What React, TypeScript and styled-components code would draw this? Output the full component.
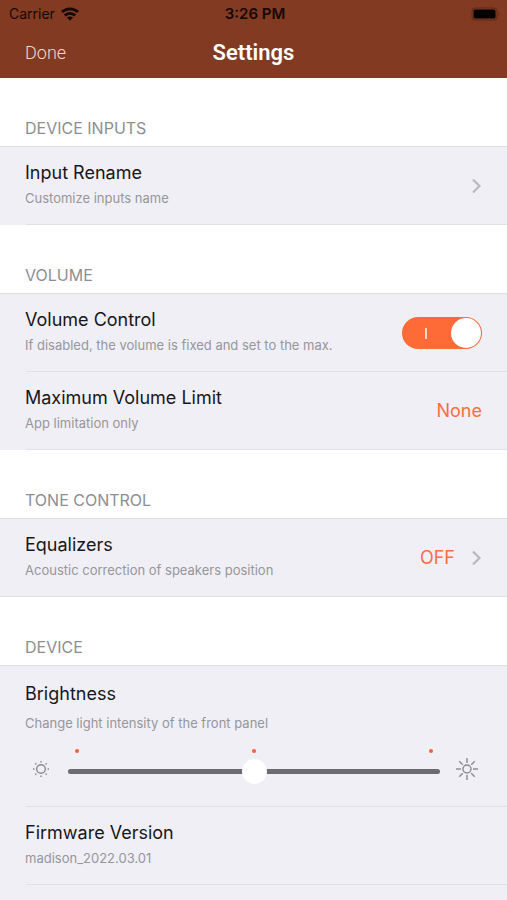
import React, { useState } from "react";
import styled, { createGlobalStyle } from "styled-components";

const GlobalStyle = createGlobalStyle`
  *, *::before, *::after { box-sizing: border-box; }
  html, body, #root { height: 100%; }
  body {
    margin: 0;
    background: #ffffff;
    font-family: Inter, "Liberation Sans", sans-serif;
    color: #17171b;
  }
  button, input { font: inherit; }
`;

const Screen = styled.div`
  display: flex;
  flex-direction: column;
  height: 100%;
  overflow: hidden;
`;

const Header = styled.header`
  flex: none;
  background: #823a22;
`;

const StatusBar = styled.div`
  display: grid;
  grid-template-columns: 1fr auto 1fr;
  align-items: center;
  height: 27px;
  padding: 0 6px 0 9px;
  font-size: 14px;
  line-height: 20px;
  color: #160805;
`;

const Carrier = styled.div`
  display: flex;
  align-items: center;
  gap: 6px;
`;

const Clock = styled.time`
  font-size: 15px;
  font-weight: 600;
`;

const BatteryIcon = styled.svg`
  justify-self: end;
`;

const NavBar = styled.nav`
  display: grid;
  grid-template-columns: 1fr auto 1fr;
  align-items: center;
  height: 51px;
  padding: 0 25px;
  font-family: Roboto, "Liberation Sans", sans-serif;
`;

const DoneButton = styled.button`
  justify-self: start;
  padding: 0;
  border: 0;
  background: none;
  color: #f0d9d0;
  font-size: 18px;
  font-weight: 300;
  line-height: 24px;
  cursor: pointer;
`;

const PageTitle = styled.h1`
  margin: 0;
  color: #ffffff;
  font-size: 22px;
  font-weight: 600;
  line-height: 28px;
`;

const Content = styled.main`
  display: flex;
  flex: 1;
  flex-direction: column;
  min-height: 0;
`;

const Group = styled.section<{ $fill?: boolean }>`
  display: flex;
  flex: ${({ $fill }) => ($fill ? "1 0 auto" : "none")};
  flex-direction: column;
`;

const GroupTitle = styled.h2`
  display: flex;
  align-items: flex-end;
  height: 68px;
  margin: 0;
  padding: 0 25px 8px;
  color: #8e8e92;
  font-size: 16px;
  font-weight: 400;
  line-height: 20px;
`;

const Panel = styled.div`
  flex: 1;
  border-top: 1px solid #dfdfe3;
  background: #f0eff5;
`;

const Row = styled.div<{ $tall?: boolean; $fullLine?: boolean }>`
  display: flex;
  flex-direction: ${({ $tall }) => ($tall ? "column" : "row")};
  align-items: ${({ $tall }) => ($tall ? "stretch" : "center")};
  justify-content: space-between;
  min-height: ${({ $tall }) => ($tall ? "141px" : "78px")};
  padding: ${({ $tall }) => ($tall ? "16px 25px 18px" : "0 25px")};
  background: linear-gradient(#e1e1e5, #e1e1e5) no-repeat
    ${({ $fullLine }) => ($fullLine ? "0" : "26px")} 100% / 100% 1px;
`;

const Labels = styled.div<{ $gap?: number }>`
  display: flex;
  flex-direction: column;
  gap: ${({ $gap = 4 }) => $gap}px;
  padding-bottom: 4px;
`;

const Label = styled.label`
  font-size: 18px;
  line-height: 24px;
`;

const Caption = styled.span`
  color: #96969b;
  font-size: 13px;
  line-height: 18px;
`;

const Action = styled.button`
  display: flex;
  align-items: center;
  gap: 16px;
  padding: 0;
  border: 0;
  background: none;
  color: #fa6e40;
  font-size: 18px;
  line-height: 24px;
  cursor: pointer;
`;

const Switch = styled.input`
  display: flex;
  flex: none;
  align-items: center;
  justify-content: space-between;
  appearance: none;
  width: 80px;
  height: 32px;
  margin: 0;
  padding: 0 1px 0 23px;
  border-radius: 16px;
  background: #b9b9be;
  cursor: pointer;

  &::before {
    content: "";
    width: 2px;
    height: 11px;
    background: #ffd9cb;
  }
  &::after {
    content: "";
    width: 30px;
    height: 30px;
    border-radius: 50%;
    background: #ffffff;
  }
  &:checked {
    background: #ff6b37;
  }
  &:not(:checked) {
    flex-direction: row-reverse;
    padding: 0 23px 0 1px;
  }
`;

const SliderRow = styled.div`
  display: grid;
  grid-template-columns: 31px 1fr 30px;
  align-items: center;
  column-gap: 12px;
`;

const Ticks = styled.div`
  display: flex;
  grid-column: 2;
  justify-content: space-between;
  padding: 0 7px;

  i {
    width: 4px;
    height: 4px;
    border-radius: 50%;
    background: #f2603c;
  }
`;

const SunIcon = styled.svg`
  grid-row: 2;
  justify-self: center;
  margin-bottom: 4px;
`;

const Slider = styled.input`
  grid-row: 2;
  appearance: none;
  width: 100%;
  height: 36px;
  margin: 0;
  background: none;
  cursor: pointer;

  &::-webkit-slider-runnable-track {
    height: 5px;
    border-radius: 3px;
    background: #6c6b72;
  }
  &::-webkit-slider-thumb {
    appearance: none;
    width: 25px;
    height: 25px;
    margin-top: -10px;
    border-radius: 50%;
    background: #ffffff;
  }
`;

const Wifi = () => (
  <svg width="18" height="14" viewBox="0 0 18 14" aria-hidden="true">
    <g fill="none" stroke="#160805" strokeWidth="2.8">
      <path d="M1 5C5.500.7 12.500.7 17 5" />
      <path d="M3.800 8.600C6.700 5.700 11.300 5.700 14.200 8.600" />
    </g>
    <path d="M6 10.600C7.800 9 10.200 9 12 10.600L9 13.800Z" fill="#160805" />
  </svg>
);

const Battery = () => (
  <BatteryIcon width="30" height="14" viewBox="0 0 30 14" aria-hidden="true">
    <rect x="1" y="1" width="25" height="12" rx="3" fill="none" stroke="#5b2818" />
    <rect x="2.500" y="2.500" width="22" height="9" rx="1.500" fill="#050100" />
    <path d="M27.500 5v4c1.300-.7 1.300-3.300 0-4z" fill="#6a2a1a" />
  </BatteryIcon>
);

const Chevron = () => (
  <svg width="11" height="16" viewBox="0 0 11 16" fill="none" aria-hidden="true">
    <path d="M2 1.500 8.500 8 2 14.500" stroke="#b9b9be" strokeWidth="2.200" />
  </svg>
);

const Sun = ({ large = false }: { large?: boolean }) => {
  const reach = large ? 11 : 8;
  const start = large ? 6 : 6.5;
  return (
    <SunIcon width="24" height="24" viewBox="-12 -12 24 24" aria-hidden="true">
      <g fill="none" stroke="#89898f" strokeWidth="1.4">
        <circle r={large ? 4 : 4.3} />
        {[0, 45, 90, 135, 180, 225, 270, 315].map((angle) => (
          <path key={angle} d={`M${start} 0H${reach}`} transform={`rotate(${angle})`} />
        ))}
      </g>
    </SunIcon>
  );
};

export default function App() {
  const [volumeControl, setVolumeControl] = useState(true);
  const [brightness, setBrightness] = useState(50);

  return (
    <Screen>
      <GlobalStyle />
      <Header>
        <StatusBar>
          <Carrier>
            Carrier
            <Wifi />
          </Carrier>
          <Clock>3:26 PM</Clock>
          <Battery />
        </StatusBar>
        <NavBar>
          <DoneButton type="button">Done</DoneButton>
          <PageTitle>Settings</PageTitle>
        </NavBar>
      </Header>

      <Content>
        <Group>
          <GroupTitle>DEVICE INPUTS</GroupTitle>
          <Panel>
            <Row>
              <Labels>
                <Label htmlFor="rename">Input Rename</Label>
                <Caption>Customize inputs name</Caption>
              </Labels>
              <Action id="rename" type="button">
                <Chevron />
              </Action>
            </Row>
          </Panel>
        </Group>

        <Group>
          <GroupTitle>VOLUME</GroupTitle>
          <Panel>
            <Row>
              <Labels>
                <Label htmlFor="volume">Volume Control</Label>
                <Caption>If disabled, the volume is fixed and set to the max.</Caption>
              </Labels>
              <Switch
                id="volume"
                type="checkbox"
                role="switch"
                checked={volumeControl}
                onChange={(event) => setVolumeControl(event.target.checked)}
              />
            </Row>
            <Row>
              <Labels>
                <Label htmlFor="limit">Maximum Volume Limit</Label>
                <Caption>App limitation only</Caption>
              </Labels>
              <Action id="limit" type="button">
                None
              </Action>
            </Row>
          </Panel>
        </Group>

        <Group>
          <GroupTitle>TONE CONTROL</GroupTitle>
          <Panel>
            <Row $fullLine>
              <Labels>
                <Label htmlFor="equalizers">Equalizers</Label>
                <Caption>Acoustic correction of speakers position</Caption>
              </Labels>
              <Action id="equalizers" type="button">
                OFF
                <Chevron />
              </Action>
            </Row>
          </Panel>
        </Group>

        <Group $fill>
          <GroupTitle>DEVICE</GroupTitle>
          <Panel>
            <Row $tall>
              <Labels $gap={8}>
                <Label htmlFor="brightness">Brightness</Label>
                <Caption>Change light intensity of the front panel</Caption>
              </Labels>
              <SliderRow>
                <Ticks>
                  <i />
                  <i />
                  <i />
                </Ticks>
                <Sun />
                <Slider
                  id="brightness"
                  type="range"
                  min={0}
                  max={100}
                  value={brightness}
                  onChange={(event) => setBrightness(Number(event.target.value))}
                />
                <Sun large />
              </SliderRow>
            </Row>
            <Row>
              <Labels>
                <Label as="span">Firmware Version</Label>
                <Caption>madison_2022.03.01</Caption>
              </Labels>
            </Row>
          </Panel>
        </Group>
      </Content>
    </Screen>
  );
}
